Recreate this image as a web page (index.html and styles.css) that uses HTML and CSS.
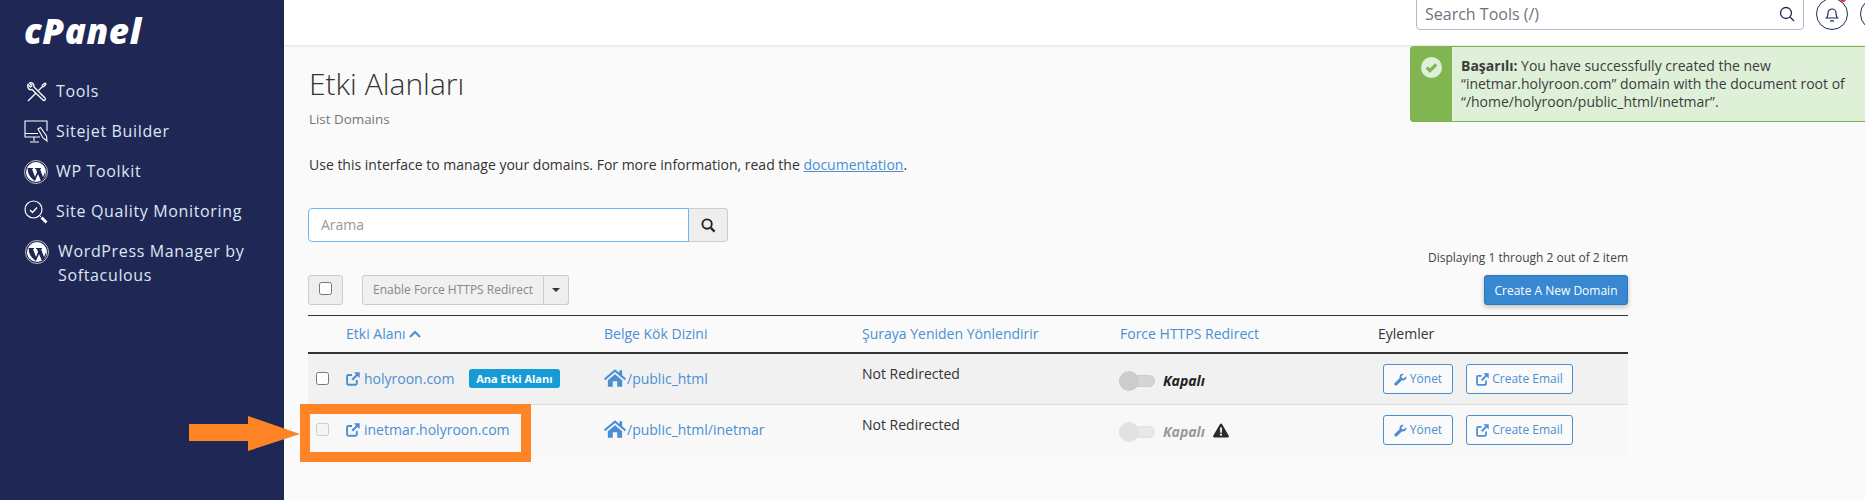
FILE: index.html
```html
<!DOCTYPE html>
<html lang="tr">
<head>
<meta charset="utf-8">
<title>Etki Alanları</title>
<link rel="stylesheet" href="styles.css">
</head>
<body>
<div class="page">
  <aside class="sidebar">
    <div class="logo">cPanel</div>
    <nav class="nav">
      <a class="nav-item"><svg class="nav-icon" viewBox="0 0 24 24"><path d="M4 21 12 13M14.500 10.500 18 7l.5-2L21 3l1 1-2 2.500-2 .5" fill="none" stroke="#fff" stroke-width="1.300"/><path d="M4 4.500 6.500 7 8 5.500 5.500 3C8 2 10.500 4 10 7l11 11c.5 1 .5 1.500 0 2s-1.500.5-2 0L8 9.500C5 10.500 3 7.500 4 4.500z" fill="none" stroke="#fff" stroke-width="1.300"/></svg><span>Tools</span></a>
      <a class="nav-item"><svg class="nav-icon" viewBox="0 0 24 24"><path d="M23 11V1H1v16h15M1 13.500h13M10 17v4M6 22h9" fill="none" stroke="#fff" stroke-width="1.100"/><path d="m14 9 2.500-1.500 6 8.500.5 5-4-3z" fill="#1f2754" stroke="#fff" stroke-width="1.100"/></svg><span>Sitejet Builder</span></a>
      <a class="nav-item"><svg class="nav-icon" viewBox="0 0 24 24"><circle cx="12" cy="12" r="11.500" fill="none" stroke="#fff" stroke-width=".7"/><circle cx="12" cy="12" r="10" fill="#fff"/><path d="M3 8h6v1H8l3 8 2-5-1-3h-1V8h6v1h-1l3 8 2-5c.5 2-.5 7-4 9l-3-7-3 7C6 18 3 12 4 9z" fill="#1f2754"/></svg><span>WP Toolkit</span></a>
      <a class="nav-item"><svg class="nav-icon" viewBox="0 0 24 24"><circle cx="9.500" cy="9.500" r="8.500" fill="none" stroke="#fff" stroke-width="1.200"/><path d="m6 10 2.500 2.500L13 7.500" fill="none" stroke="#fff" stroke-width="1.300"/><path d="m15.500 15.500 1.500 1.500" stroke="#fff" stroke-width="1"/><path d="m17.500 17.500 5 5" stroke="#fff" stroke-width="2.800"/></svg><span>Site Quality Monitoring</span></a>
      <a class="nav-item nav-item-wrap"><svg class="nav-icon" viewBox="0 0 24 24"><circle cx="12" cy="12" r="11.500" fill="none" stroke="#fff" stroke-width=".7"/><circle cx="12" cy="12" r="10" fill="#fff"/><path d="M3 8h6v1H8l3 8 2-5-1-3h-1V8h6v1h-1l3 8 2-5c.5 2-.5 7-4 9l-3-7-3 7C6 18 3 12 4 9z" fill="#1f2754"/></svg><span>WordPress Manager by Softaculous</span></a>
    </nav>
  </aside>

  <div class="main">
    <header class="topbar">
      <div class="tool-search">
        <span class="tool-search-text">Search Tools (/)</span>
        <svg class="tool-search-icon" viewBox="0 0 16 16"><circle cx="7" cy="7" r="5.500" fill="none" stroke="#1f2754" stroke-width="1.300"/><path d="m11 11 4 4" stroke="#1f2754" stroke-width="1.300"/></svg>
      </div>
      <div class="round-btn">
        <svg class="bell" viewBox="0 0 16 16"><path d="M2.500 12c1-1 1.500-2 1.500-5a4 4 0 0 1 8 0c0 3 .5 4 1.500 5zM6 14.800h4" fill="none" stroke="#1f2754" stroke-width="1.200"/></svg>
        <span class="dot"></span>
      </div>
      <div class="round-btn"></div>
    </header>

    <div class="alert">
      <div class="alert-stripe">
        <svg class="alert-icon" viewBox="0 0 20 20"><circle cx="10" cy="10" r="10" fill="#dff0d8"/><path d="m5.500 10 3 3 6-6" fill="none" stroke="#80b552" stroke-width="3"/></svg>
      </div>
      <div class="alert-body"><b>Başarılı:</b> You have successfully created the new “inetmar.holyroon.com” domain with the document root of “/home/holyroon/public_html/inetmar”.</div>
    </div>

    <main class="content">
      <h1 class="title">Etki Alanları</h1>
      <p class="subtitle">List Domains</p>
      <p class="intro">Use this interface to manage your domains. For more information, read the <a class="link underlined">documentation</a>.</p>

      <div class="search-group">
        <div class="search-input">Arama</div>
        <div class="search-btn"><svg class="search-btn-icon" viewBox="0 0 16 16"><circle cx="6.500" cy="6.500" r="5" fill="none" stroke="#222" stroke-width="2"/><path d="m10.500 10.500 4 4" stroke="#222" stroke-width="2.400"/></svg></div>
      </div>

      <div class="paging">Displaying 1 through 2 out of 2 item</div>

      <div class="toolbar">
        <div class="check-btn"><span class="checkbox"></span></div>
        <div class="bulk">
          <span class="bulk-label">Enable Force HTTPS Redirect</span>
          <span class="bulk-caret"><i class="caret"></i></span>
        </div>
        <div class="create-btn">Create A New Domain</div>
      </div>

      <table class="domains">
        <thead>
          <tr>
            <th class="col-check"></th>
            <th><a class="link">Etki Alanı</a> <svg class="sort" viewBox="0 0 12 8"><path d="m1 7 5-5 5 5" fill="none" stroke="#4a8fd4" stroke-width="2"/></svg></th>
            <th><a class="link">Belge Kök Dizini</a></th>
            <th><a class="link">Şuraya Yeniden Yönlendirir</a></th>
            <th><a class="link">Force HTTPS Redirect</a></th>
            <th class="col-actions">Eylemler</th>
          </tr>
        </thead>
        <tbody>
          <tr class="row-odd">
            <td class="col-check"><span class="checkbox"></span></td>
            <td class="cell-domain">
              <svg class="ext" viewBox="0 0 14 14"><path d="M10.800 8v3.500a1.200 1.200 0 0 1-1.200 1.200H2.300a1.200 1.200 0 0 1-1.200-1.200V4.200A1.200 1.200 0 0 1 2.300 3H6" fill="none" stroke="#4a8fd4" stroke-width="1.900"/><path d="M8 .3h5.700V6L11.500 3.900 7 8.500 5.400 6.900 10 2.400z" fill="#4a8fd4"/></svg><a class="link">holyroon.com</a>
              <span class="badge">Ana Etki Alanı</span>
            </td>
            <td class="cell-root">
              <svg class="home" viewBox="0 0 20 16"><path d="M10 0 0 8.500 1 10l9-7.500 9 7.500 1-1.500-3.500-3V1h-2.500v2.400zM3.500 10 10 4.500l6.500 5.500v6h-4.500v-5H8v5H3.500z" fill="#4a8fd4"/></svg><a class="link">/public_html</a>
            </td>
            <td class="cell-redirect">Not Redirected</td>
            <td class="cell-toggle">
              <div class="toggle-wrap"><span class="toggle"><i class="knob"></i></span><em class="state">Kapalı</em></div>
            </td>
            <td class="cell-actions">
              <div class="actions">
                <span class="action action-manage">
                  <svg class="wrench" viewBox="0 0 14 14"><path d="M13 3.500 10.500 6 8.500 5.500 8 3.500 10.500 1C8.500 0 6 1.500 6 4c0 .5 0 1 .2 1.400L.8 10.800c-.6.600-.6 1.500 0 2l.4.400c.5.600 1.400.6 2 0l5.400-5.400c.4.200.9.200 1.400.2 2.500 0 4-2.500 3-4.500z" fill="#4a8fd4"/></svg>Yönet
                </span>
                <span class="action action-email">
                  <svg class="ext" viewBox="0 0 14 14"><path d="M10.800 8v3.500a1.200 1.200 0 0 1-1.200 1.200H2.300a1.200 1.200 0 0 1-1.200-1.200V4.200A1.200 1.200 0 0 1 2.300 3H6" fill="none" stroke="#4a8fd4" stroke-width="1.900"/><path d="M8 .3h5.700V6L11.500 3.900 7 8.500 5.400 6.900 10 2.400z" fill="#4a8fd4"/></svg>Create Email
                </span>
              </div>
            </td>
          </tr>
          <tr class="row-even">
            <td class="col-check"><span class="checkbox is-disabled"></span></td>
            <td class="cell-domain">
              <svg class="ext" viewBox="0 0 14 14"><path d="M10.800 8v3.500a1.200 1.200 0 0 1-1.200 1.200H2.300a1.200 1.200 0 0 1-1.200-1.200V4.200A1.200 1.200 0 0 1 2.300 3H6" fill="none" stroke="#4a8fd4" stroke-width="1.900"/><path d="M8 .3h5.700V6L11.500 3.900 7 8.500 5.400 6.900 10 2.400z" fill="#4a8fd4"/></svg><a class="link">inetmar.holyroon.com</a>
            </td>
            <td class="cell-root">
              <svg class="home" viewBox="0 0 20 16"><path d="M10 0 0 8.500 1 10l9-7.500 9 7.500 1-1.500-3.500-3V1h-2.500v2.400zM3.500 10 10 4.500l6.500 5.500v6h-4.500v-5H8v5H3.500z" fill="#4a8fd4"/></svg><a class="link">/public_html/inetmar</a>
            </td>
            <td class="cell-redirect">Not Redirected</td>
            <td class="cell-toggle">
              <div class="toggle-wrap"><span class="toggle is-disabled"><i class="knob"></i></span><em class="state is-disabled">Kapalı</em>
              <svg class="warn" viewBox="0 0 16 14"><path d="M8 0c.5 0 .9.300 1.100.7l6.700 11.600c.4.700-.1 1.700-1.100 1.700H1.300C.3 14-.2 13 .2 12.300L6.900.7C7.100.3 7.500 0 8 0z" fill="#2b2b2b"/><path d="M7 4h2l-.2 5.200H7.200zM7 10.200h2V12H7z" fill="#fafafa"/></svg></div>
            </td>
            <td class="cell-actions">
              <div class="actions">
                <span class="action action-manage">
                  <svg class="wrench" viewBox="0 0 14 14"><path d="M13 3.500 10.500 6 8.500 5.500 8 3.500 10.500 1C8.500 0 6 1.500 6 4c0 .5 0 1 .2 1.400L.8 10.800c-.6.600-.6 1.500 0 2l.4.400c.5.600 1.400.6 2 0l5.400-5.400c.4.200.9.200 1.400.2 2.500 0 4-2.500 3-4.500z" fill="#4a8fd4"/></svg>Yönet
                </span>
                <span class="action action-email">
                  <svg class="ext" viewBox="0 0 14 14"><path d="M10.800 8v3.500a1.200 1.200 0 0 1-1.200 1.200H2.300a1.200 1.200 0 0 1-1.200-1.200V4.200A1.200 1.200 0 0 1 2.300 3H6" fill="none" stroke="#4a8fd4" stroke-width="1.900"/><path d="M8 .3h5.700V6L11.500 3.900 7 8.500 5.400 6.900 10 2.400z" fill="#4a8fd4"/></svg>Create Email
                </span>
              </div>
            </td>
          </tr>
        </tbody>
      </table>
    </main>
  </div>

  <div class="mark-box"></div>
  <svg class="mark-arrow" viewBox="0 0 111 35"><path d="M0 8h59V0l52 18-52 17V25H0z" fill="#ff8426"/></svg>
</div>
</body>
</html>
```

FILE: styles.css
```css
* { box-sizing: border-box; }

html, body {
  margin: 0;
  height: 500px;
  overflow: hidden;
}

body {
  font-family: "Open Sans", "Noto Sans", sans-serif;
  font-size: 14px;
  line-height: 20px;
  color: #333;
  background: #fafafa;
}

.page {
  position: relative;
  display: flex;
  height: 500px;
  overflow: hidden;
}

/* Sidebar */
.sidebar {
  flex: 0 0 284px;
  background: #1f2754;
  color: #dde6f3;
  padding: 11px 16px 0 24px;
}

.logo {
  font-family: "Open Sans", sans-serif;
  font-weight: 800;
  font-style: italic;
  font-size: 35px;
  line-height: 40px;
  letter-spacing: .6px;
  color: #fff;
}

.nav {
  margin-top: 28px;
  display: flex;
  flex-direction: column;
}

.nav-item {
  display: flex;
  align-items: flex-start;
  gap: 8px;
  min-height: 40px;
  font-size: 16px;
  line-height: 24px;
  letter-spacing: .65px;
}

.nav-icon {
  flex: 0 0 24px;
  width: 24px;
  height: 24px;
  margin-top: 1px;
}

.nav-item-wrap {
  padding-left: 1px;
  gap: 9px;
}

/* Top bar */
.main {
  flex: 1;
  min-width: 0;
  display: flex;
  flex-direction: column;
}

.topbar {
  flex: 0 0 45px;
  display: flex;
  align-items: flex-end;
  padding: 0 0 15px 1132px;
  gap: 12px;
  background: #fff;
  box-shadow: 0 1px 3px rgba(0, 0, 0, .1);
  overflow: hidden;
}

.tool-search {
  flex: 0 0 388px;
  height: 40px;
  display: flex;
  align-items: flex-end;
  justify-content: space-between;
  padding: 0 8px 3px 8px;
  background: #fff;
  border: 1px solid #b5b9c9;
  border-radius: 4px;
  color: #6c757d;
  font-size: 16px;
  line-height: 24px;
}

.tool-search-icon {
  width: 16px;
  height: 16px;
  margin-bottom: 4px;
}

.round-btn {
  position: relative;
  flex: 0 0 32px;
  height: 32px;
  display: flex;
  align-items: center;
  justify-content: center;
  border: 1px solid #1f2754;
  border-radius: 50%;
}

.bell {
  width: 16px;
  height: 16px;
}

.dot {
  position: absolute;
  top: -3px;
  right: 1px;
  width: 6px;
  height: 6px;
  border-radius: 50%;
  background: #e0324a;
}

/* Success alert */
.alert {
  position: absolute;
  top: 46px;
  left: 1410px;
  width: 470px;
  height: 76px;
  display: flex;
  background: #dff0d8;
  border: 1px solid #80b552;
  border-radius: 3px;
  color: #3c3c3c;
  line-height: 18px;
}

.alert-stripe {
  flex: 0 0 41px;
  background: #80b552;
  padding: 10px 0 0 10px;
}

.alert-icon {
  display: block;
  width: 21px;
  height: 21px;
}

.alert-body {
  width: 400px;
  padding: 10px 0 0 9px;
}

/* Content */
.content {
  flex: 1;
  padding: 0 237px 0 24px;
}

.title {
  margin: 19px 0 0 1px;
  font-size: 30px;
  line-height: 40px;
  font-weight: 300;
  color: #333;
}

.subtitle {
  margin: 5px 0 0 1px;
  font-size: 13.400px;
  line-height: 20px;
  color: #777;
}

.intro {
  margin: 26px 0 0 1px;
}

.link {
  color: #4a8fd4;
}

.underlined {
  text-decoration: underline;
}

.search-group {
  display: flex;
  margin-top: 33px;
  width: 420px;
  height: 34px;
}

.search-input {
  flex: 1;
  padding: 6px 12px;
  background: #fff;
  border: 1px solid #6fb4ec;
  border-radius: 4px 0 0 4px;
  color: #999;
}

.search-btn {
  flex: 0 0 39px;
  display: flex;
  align-items: center;
  justify-content: center;
  background: #eee;
  border: 1px solid #ccc;
  border-left: 0;
  border-radius: 0 4px 4px 0;
}

.search-btn-icon {
  width: 15px;
  height: 15px;
}

.paging {
  margin-top: 6px;
  text-align: right;
  font-size: 12px;
  line-height: 20px;
  color: #444;
}

.toolbar {
  display: flex;
  align-items: center;
  margin-top: 7px;
  height: 30px;
}

.check-btn {
  width: 35px;
  height: 30px;
  display: flex;
  justify-content: center;
  padding-top: 6px;
  background: #eee;
  border: 1px solid #ccc;
  border-radius: 3px;
}

.checkbox {
  display: inline-block;
  width: 13px;
  height: 13px;
  background: #fff;
  border: 1px solid #767676;
  border-radius: 2.500px;
}

.checkbox.is-disabled {
  background: #f5f5f5;
  border-color: #ccc;
}

.bulk {
  display: flex;
  margin-left: 19px;
  width: 207px;
  height: 30px;
  color: #888;
  font-size: 12px;
  line-height: 28px;
}

.bulk-label {
  flex: 1;
  text-align: center;
  background: #f0f0f0;
  border: 1px solid #ccc;
  border-radius: 3px 0 0 3px;
}

.bulk-caret {
  flex: 0 0 25px;
  display: flex;
  align-items: center;
  justify-content: center;
  background: #eee;
  border: 1px solid #ccc;
  border-left: 0;
  border-radius: 0 3px 3px 0;
}

.caret {
  width: 0;
  height: 0;
  border: 4px solid transparent;
  border-top-color: #333;
  border-bottom: 0;
}

.create-btn {
  margin-left: auto;
  width: 144px;
  height: 30px;
  text-align: center;
  font-size: 12px;
  line-height: 29px;
  color: #fff;
  background: #3788d0;
  border: 1px solid #2d78bd;
  border-radius: 3px;
  box-shadow: 0 2px 5px rgba(0, 0, 0, .25);
}

/* Table */
.domains {
  width: 1320px;
  margin-top: 10px;
  table-layout: fixed;
  border-collapse: separate;
  border-spacing: 0;
}

.domains th {
  height: 39px;
  padding: 0 8px;
  text-align: left;
  font-weight: 400;
  font-size: 14px;
  color: #333;
  border-top: 1px solid #333;
  border-bottom: 2px solid #333;
}

.col-check {
  width: 30px;
}

.col-actions {
  width: 258px;
}

.domains td {
  padding: 0 8px;
  height: 51px;
  vertical-align: top;
}

.row-odd td {
  background: #f1f1f1;
  border-bottom: 1px solid #ddd;
}

.row-even td {
  background: #f8f8f8;
}

.domains td.col-check {
  padding: 18px 0 0 8px;
}

.domains .checkbox {
  display: block;
}

.cell-domain,
.cell-root {
  padding-top: 15px !important;
}

.cell-redirect {
  padding-top: 10px !important;
}

.cell-toggle {
  padding-top: 17px !important;
  white-space: nowrap;
}

.cell-actions {
  padding: 10px 8px 0 13px !important;
}

.ext {
  width: 14px;
  height: 14px;
  margin-right: 4px;
  vertical-align: -2px;
}

.home {
  width: 22px;
  height: 18px;
  margin-right: 1px;
  vertical-align: -3px;
}

.badge {
  display: inline-block;
  margin-left: 11px;
  padding: 0 7px;
  height: 19px;
  line-height: 19px;
  vertical-align: 1px;
  font-size: 11px;
  font-weight: 700;
  color: #fff;
  background: #179bd7;
  border-radius: 3px;
}

.sort {
  width: 12px;
  height: 8px;
  vertical-align: 1px;
}

.toggle-wrap {
  display: flex;
  align-items: center;
  height: 20px;
}

.toggle {
  position: relative;
  display: block;
  flex: 0 0 36px;
  height: 12px;
  margin: 0 8px 0 -1px;
  background: #d5d5d5;
  border: 1px solid #ccc;
  border-radius: 6px;
}

.knob {
  position: absolute;
  top: -5px;
  left: -1px;
  width: 20px;
  height: 20px;
  background: #ccc;
  border-radius: 50%;
}

.toggle.is-disabled {
  background: #e8e8e8;
  border-color: #e2e2e2;
}

.toggle.is-disabled .knob {
  background: #e2e2e2;
}

.state {
  font-weight: 700;
  font-style: italic;
  color: #222;
}

.state.is-disabled {
  color: #999;
}

.warn {
  flex: 0 0 16px;
  width: 16px;
  height: 15px;
  margin: -4px 0 0 8px;
}

.actions {
  display: flex;
  gap: 13px;
}

.action {
  display: flex;
  align-items: center;
  justify-content: center;
  height: 30px;
  font-size: 12px;
  color: #4a8fd4;
  background: #fafafa;
  border: 1px solid #4a8fd4;
  border-radius: 3px;
  white-space: nowrap;
}

.action-manage {
  width: 70px;
}

.action-email {
  width: 107px;
}

.action .ext,
.wrench {
  width: 13px;
  height: 13px;
  margin-right: 3px;
}

/* Annotation overlay */
.mark-box {
  position: absolute;
  left: 300px;
  top: 404px;
  width: 231px;
  height: 58px;
  border: 10px solid #ff8426;
}

.mark-arrow {
  position: absolute;
  left: 189px;
  top: 416px;
  width: 111px;
  height: 35px;
}
```
